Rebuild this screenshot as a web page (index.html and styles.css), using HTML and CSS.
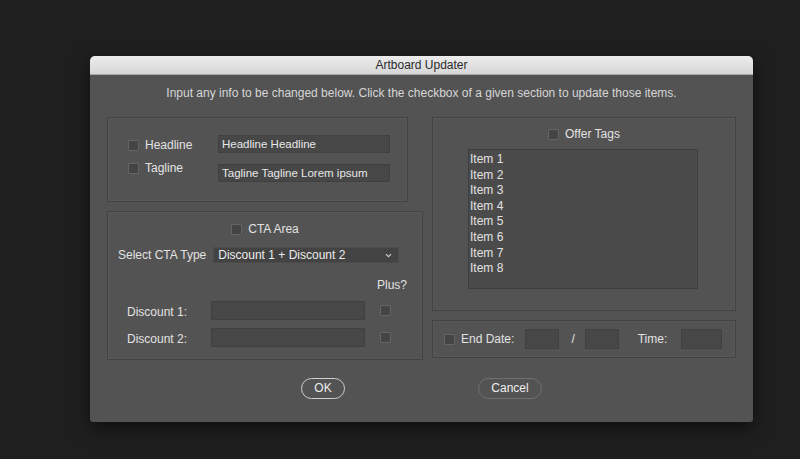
FILE: index.html
```html
<!DOCTYPE html>
<html>
<head>
<meta charset="utf-8">
<link rel="stylesheet" href="styles.css">
</head>
<body>
<div class="dialog">
  <div class="titlebar">Artboard Updater</div>
  <div class="subtitle">Input any info to be changed below. Click the checkbox of a given section to update those items.</div>
  <div class="content">
    <div class="col-left">
      <div class="panel hl-panel">
        <div class="hl-labels">
          <div class="check-row"><span class="cb"></span><span class="lbl">Headline</span></div>
          <div class="check-row"><span class="cb"></span><span class="lbl">Tagline</span></div>
        </div>
        <div class="hl-inputs">
          <div class="field hl-field">Headline Headline</div>
          <div class="field hl-field">Tagline Tagline Lorem ipsum</div>
        </div>
      </div>
      <div class="panel cta-panel">
        <div class="check-row center"><span class="cb"></span><span class="lbl">CTA Area</span></div>
        <div class="select-row">
          <span class="lbl">Select CTA Type</span>
          <div class="select">
            <span>Discount 1 + Discount 2</span>
            <svg class="chev" width="7" height="5" viewBox="0 0 7 5"><path d="M1 1.2 L3.5 3.6 L6 1.2" fill="none" stroke="#c8c8c8" stroke-width="1.2"/></svg>
          </div>
        </div>
        <div class="plus-row"><span class="lbl">Plus?</span></div>
        <div class="disc-row first">
          <span class="lbl disc-lbl">Discount 1:</span>
          <div class="field disc-field"></div>
          <span class="cb"></span>
        </div>
        <div class="disc-row">
          <span class="lbl disc-lbl">Discount 2:</span>
          <div class="field disc-field"></div>
          <span class="cb"></span>
        </div>
      </div>
    </div>
    <div class="col-right">
      <div class="panel offer-panel">
        <div class="check-row center"><span class="cb"></span><span class="lbl">Offer Tags</span></div>
        <div class="listbox">
          <div class="item">Item 1</div>
          <div class="item">Item 2</div>
          <div class="item">Item 3</div>
          <div class="item">Item 4</div>
          <div class="item">Item 5</div>
          <div class="item">Item 6</div>
          <div class="item">Item 7</div>
          <div class="item">Item 8</div>
        </div>
      </div>
      <div class="panel end-panel">
        <span class="cb"></span>
        <span class="lbl end-lbl">End Date:</span>
        <div class="field small"></div>
        <span class="lbl slash">/</span>
        <div class="field small"></div>
        <span class="lbl time-lbl">Time:</span>
        <div class="field time"></div>
      </div>
    </div>
  </div>
  <div class="buttons">
    <div class="btn ok">OK</div>
    <div class="btn cancel">Cancel</div>
  </div>
</div>
</body>
</html>
```

FILE: styles.css
```css
* { box-sizing: border-box; }
html, body { margin: 0; padding: 0; }
body {
  background: #1f1f1f;
  width: 800px;
  height: 459px;
  overflow: hidden;
  font-family: "Liberation Sans", Arial, sans-serif;
  font-size: 12px;
  color: #dcdcdc;
}
.dialog {
  margin: 56px 0 0 90px;
  width: 663px;
  height: 366px;
  background: #535353;
  border-radius: 5px 5px 3px 3px;
  box-shadow: 0 6px 18px rgba(0,0,0,0.55);
  overflow: hidden;
}
.titlebar {
  height: 19px;
  line-height: 19px;
  text-align: center;
  color: #2b2b2b;
  font-size: 12px;
  background: linear-gradient(#ececec, #d7d7d7);
  border-bottom: 1px solid #a8a8a8;
}
.subtitle {
  margin-top: 11px;
  height: 14px;
  line-height: 14px;
  text-align: center;
  color: #d6d6d6;
}
.content {
  display: grid;
  grid-template-columns: 316px 304px;
  column-gap: 9px;
  padding: 0 17px;
  margin-top: 17px;
}
.col-left, .col-right {
  display: flex;
  flex-direction: column;
  gap: 9px;
}
.panel {
  border: 1px solid #434343;
  box-shadow: inset 0 0 0 1px rgba(255,255,255,0.03);
}
.lbl {
  line-height: 14px;
  white-space: nowrap;
  color: #e2e2e2;
}
.cb {
  display: inline-block;
  width: 11px;
  height: 11px;
  background: #444444;
  border: 1px solid #646464;
  border-radius: 1px;
  flex: none;
}
.check-row {
  display: flex;
  align-items: center;
  gap: 6px;
  height: 14px;
}
.check-row.center { justify-content: center; }
.field {
  background: #474747;
  border: 1px solid #404040;
  color: #e8e8e8;
}

/* headline panel */
.hl-panel {
  width: 301px;
  height: 85px;
  display: flex;
  align-items: flex-start;
  padding: 17px 0 0 20px;
}
.hl-labels {
  display: flex;
  flex-direction: column;
  gap: 9px;
  padding-top: 3px;
  width: 90px;
}
.hl-inputs {
  display: flex;
  flex-direction: column;
  gap: 11px;
}
.hl-field {
  width: 172px;
  height: 18px;
  line-height: 17px;
  padding-left: 3px;
  font-size: 11.5px;
}

/* CTA panel */
.cta-panel {
  height: 149px;
  padding-top: 10px;
}
.select-row {
  display: flex;
  align-items: center;
  margin-top: 11px;
  padding-left: 10px;
  gap: 7px;
}
.select {
  width: 186px;
  height: 16px;
  background: #434343;
  border: 1px solid #4b4b4b;
  display: flex;
  align-items: center;
  justify-content: space-between;
  padding: 0 6px 0 4px;
  color: #ececec;
}
.plus-row {
  display: flex;
  justify-content: flex-end;
  padding-right: 15px;
  margin-top: 15px;
}
.disc-row {
  display: flex;
  align-items: center;
  padding-left: 19px;
  margin-top: 8px;
}
.disc-row.first { margin-top: 9px; }
.disc-lbl { width: 84px; padding-top: 2px; }
.disc-field {
  width: 154px;
  height: 19px;
}
.disc-row .cb { margin-left: 15px; }

/* offer panel */
.offer-panel {
  height: 194px;
  padding-top: 9px;
  display: flex;
  flex-direction: column;
  align-items: center;
}
.listbox {
  margin-top: 8px;
  width: 230px;
  height: 140px;
  background: #4b4b4b;
  border: 1px solid #3e3e3e;
  padding: 2px 0 0 1px;
  align-self: center;
  margin-right: 2px;
}
.item {
  height: 15.6px;
  line-height: 15.6px;
  color: #e2e2e2;
}

/* end date panel */
.end-panel {
  height: 38px;
  display: flex;
  align-items: center;
  padding-left: 11px;
}
.end-lbl { margin-left: 6px; }
.field.small { width: 34px; height: 20px; margin-left: 11px; }
.slash { margin-left: 12px; }
.slash + .field.small { margin-left: 10px; }
.time-lbl { margin-left: 19px; }
.field.time { width: 41px; height: 20px; margin-left: 14px; }

/* buttons */
.buttons {
  display: flex;
  justify-content: center;
  gap: 133px;
  margin-top: 18px;
}
.btn {
  height: 21px;
  line-height: 19px;
  border-radius: 11px;
  text-align: center;
  color: #eeeeee;
}
.btn.ok {
  width: 44px;
  border: 1.5px solid #cfcfcf;
}
.btn.cancel {
  width: 64px;
  border: 1px solid #707070;
}
```
